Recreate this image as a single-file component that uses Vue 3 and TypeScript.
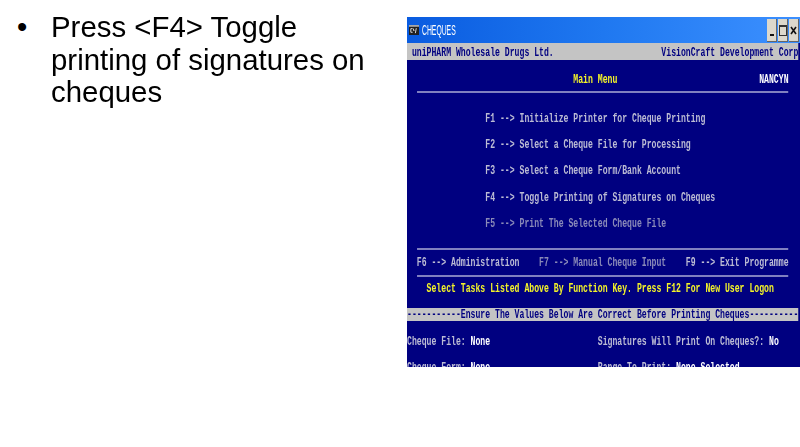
<template>
  <div class="slide">
    <div class="notes">
      <span class="bullet">•</span>
      <p>Press &lt;F4&gt; Toggle printing of signatures on cheques</p>
    </div>

    <div class="window">
      <div class="titlebar">
        <svg class="app-icon" width="10" height="10" viewBox="0 0 11 11">
          <rect width="11" height="11" fill="#202020" />
          <rect x="0" y="0" width="11" height="2" fill="#a8a8a8" />
          <path d="M2 4h2M2 4v4h2M5 4v2h1M8 3.5L7 9" stroke="#e8e8e8" stroke-width="1" fill="none" />
        </svg>
        <span class="title">CHEQUES</span>
        <div class="controls">
          <button class="ctl"><i class="min"></i></button>
          <button class="ctl"><i class="max"></i></button>
          <button class="ctl">
            <svg width="7" height="9" viewBox="0 0 7 9">
              <path d="M1 1l5 7M6 1L1 8" stroke="#111" stroke-width="1.6" fill="none" />
            </svg>
          </button>
        </div>
      </div>

      <div class="console">
        <div v-for="(row, i) in rows" :key="i" class="row" :class="row.kind">
          <template v-if="row.kind !== 'rule'">
            <span v-for="(seg, j) in row.segs" :key="j" :class="seg.c">{{ seg.t }}</span>
          </template>
        </div>
      </div>
    </div>
  </div>
</template>

<script setup lang="ts">
type Seg = { t: string; c?: string }
type Row = { kind?: string; segs?: Seg[] }

const line = (t: string, c?: string): Row => ({ segs: [{ t, c }] })
const blank: Row = {}
const rule: Row = { kind: 'rule' }

// 80x25 console, text placed by column with spaces
const rows: Row[] = [
  { kind: 'bar top', segs: [{ t: ' uniPHARM Wholesale Drugs Ltd.                      VisionCraft Development Corp' }] },
  blank,
  { segs: [{ t: ' '.repeat(34) }, { t: 'Main Menu', c: 'yellow' }, { t: ' '.repeat(29) }, { t: 'NANCYN', c: 'white' }] },
  rule,
  blank,
  line(' '.repeat(16) + 'F1 --> Initialize Printer for Cheque Printing'),
  blank,
  line(' '.repeat(16) + 'F2 --> Select a Cheque File for Processing'),
  blank,
  line(' '.repeat(16) + 'F3 --> Select a Cheque Form/Bank Account'),
  blank,
  line(' '.repeat(16) + 'F4 --> Toggle Printing of Signatures on Cheques'),
  blank,
  line(' '.repeat(16) + 'F5 --> Print The Selected Cheque File', 'dim'),
  blank,
  rule,
  {
    segs: [
      { t: '  F6 --> Administration    ' },
      { t: 'F7 --> Manual Cheque Input', c: 'dim' },
      { t: '    F9 --> Exit Programme' }
    ]
  },
  rule,
  line('    Select Tasks Listed Above By Function Key. Press F12 For New User Logon', 'yellow'),
  blank,
  { kind: 'bar', segs: [{ t: '-----------Ensure The Values Below Are Correct Before Printing Cheques----------' }] },
  blank,
  {
    segs: [
      { t: 'Cheque File: ' },
      { t: 'None', c: 'white' },
      { t: ' '.repeat(22) + 'Signatures Will Print On Cheques?: ' },
      { t: 'No', c: 'white' }
    ]
  },
  blank,
  {
    segs: [
      { t: 'Cheque Form: ' },
      { t: 'None', c: 'white' },
      { t: ' '.repeat(22) + 'Range To Print: ' },
      { t: 'None Selected', c: 'white' }
    ]
  }
]
</script>

<style>
html,
body {
  margin: 0;
  background: #fff;
}
</style>

<style scoped>
.slide {
  width: 800px;
  height: 447px;
  display: flex;
  overflow: hidden;
  background: #fff;
}

.notes {
  width: 407px;
  flex: none;
  box-sizing: border-box;
  display: flex;
  padding: 11px 30px 0 17px;
  font-family: "Liberation Sans", Arial, sans-serif;
  font-size: 29.4px;
  line-height: 32.6px;
  color: #000;
}

.bullet {
  width: 34px;
  flex: none;
}

.notes p {
  margin: 0;
  filter: blur(0.3px);
}

.window {
  width: 393px;
  height: 350px;
  margin-top: 17px;
  flex: none;
  overflow: hidden;
  background: #000080;
}

.titlebar {
  height: 26px;
  display: flex;
  align-items: center;
  padding: 0 1px 0 2px;
  background: linear-gradient(90deg, #0a5ce0 0%, #1f78f0 50%, #3c90ff 100%);
}

.app-icon {
  flex: none;
}

.title {
  width: 34px;
  margin-left: 3px;
  font-family: "Liberation Sans", Arial, sans-serif;
  font-size: 14.5px;
  color: #fff;
  display: inline-block;
  transform: scaleX(0.47);
  transform-origin: left center;
  filter: blur(0.3px);
}

.controls {
  margin-left: auto;
  display: flex;
  gap: 1px;
  padding-top: 1px;
}

.ctl {
  width: 10px;
  height: 23px;
  padding: 0;
  border: none;
  border-right: 1px solid #666;
  border-bottom: 1px solid #666;
  background: #dcd8cc;
  display: flex;
  align-items: center;
  justify-content: center;
}

.min {
  width: 4px;
  height: 2px;
  margin-top: 9px;
  background: #111;
}

.max {
  width: 6px;
  height: 8px;
  border: 1px solid #333;
  border-top-width: 2px;
}

.console {
  width: 624px;
  transform: scaleX(0.627);
  transform-origin: left top;
  font-family: "Liberation Mono", "Courier New", monospace;
  font-size: 13px;
  font-weight: 700;
  color: #bcbcd4;
  filter: blur(0.45px);
}

.row {
  height: 13.1px;
  line-height: 13.6px;
  white-space: pre;
}

.top {
  height: 16.6px;
  padding-top: 2.5px;
  box-sizing: border-box;
}

.bar {
  background: #c4c4c4;
  color: #000080;
}

.rule {
  display: flex;
  align-items: center;
  padding: 0 15.6px;
}

.rule::before {
  content: "";
  flex: 1;
  height: 2px;
  background: #8080c0;
}

.yellow {
  color: #f4f428;
}

.white {
  color: #fff;
}

.dim {
  color: #8a8ab8;
}
</style>
